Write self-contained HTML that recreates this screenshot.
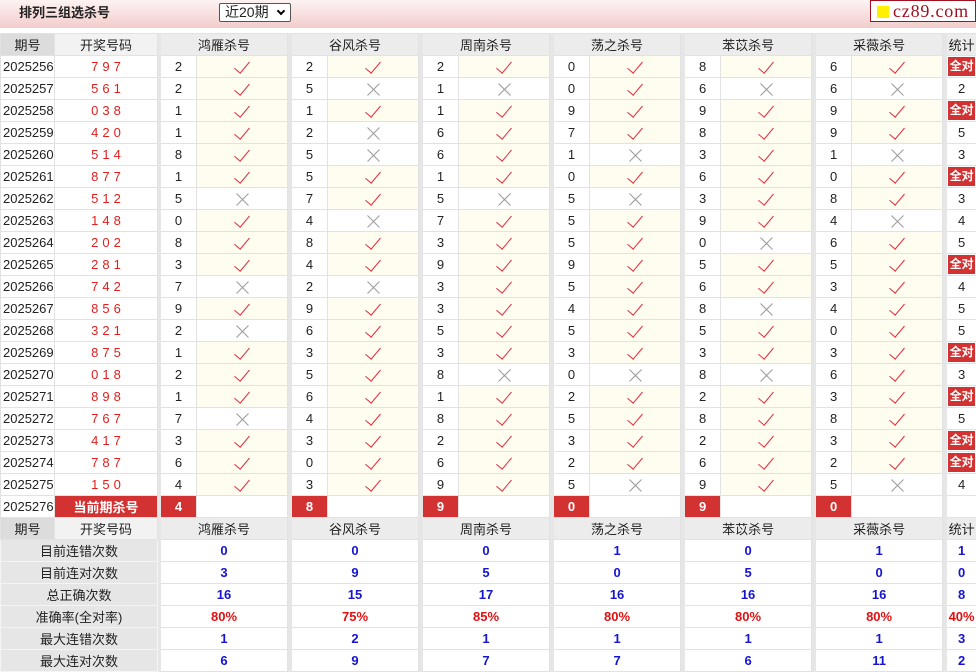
<!DOCTYPE html>
<html><head><meta charset="utf-8"><style>
*{box-sizing:border-box}
body{margin:0;width:976px;height:670px;overflow:hidden;background:#fff;font-family:"Liberation Sans","Noto Sans CJK SC",sans-serif;font-size:13px;color:#222}
.top{position:absolute;left:0;top:0;width:976px;height:28px;background:linear-gradient(#fdf3f3,#f3cccc)}
.ttl{position:absolute;left:19px;top:5px;font-size:13px;line-height:16px;font-weight:bold;color:#222}
.sel{position:absolute;left:219px;top:3px;width:72px;height:19px;border:1px solid #555;background:#fff;border-radius:2px;font-size:14px;padding-left:5px;line-height:17px}
.sel b{position:absolute;right:6px;top:4px;width:6px;height:6px;border:solid #000;border-width:0 2px 2px 0;transform:rotate(45deg)}
.logo{position:absolute;left:870px;top:0;width:106px;height:22px;background:#fff;border:1px solid #a01020;font-family:"Liberation Serif",serif;font-size:18px;color:#a01020;line-height:20px;padding-left:22px;letter-spacing:.8px;overflow:hidden;white-space:nowrap}
.logo i{position:absolute;left:6px;top:5px;width:12px;height:12px;background:#ffef00}
table{position:absolute;left:0;top:33px;border-collapse:collapse;table-layout:fixed;width:976px}
td{height:22px;border:1px solid #e2e2e2;padding:0;text-align:center;white-space:nowrap;overflow:hidden}
.h td{background:#ececec;color:#222}
.h td.h1{background:#dcdcdc}
.h td.h2{background:#f2f2f2}
td.s{background:#e6e6e6;border-color:#e6e6e6}
td.q{text-align:left;padding-left:2px}
td.r{color:#e02020;letter-spacing:4px;padding-left:4px}
td.c{background:#fffdf0}
i.k{display:inline-block;width:8px;height:15px;border:solid #e03040;border-width:0 1.6px 1.6px 0;transform:rotate(40deg);margin-top:-4px;vertical-align:middle}
i.x{display:inline-block;position:relative;width:13px;height:13px;vertical-align:middle}
i.x:before,i.x:after{content:"";position:absolute;left:-2px;top:6px;width:17px;height:1px;background:#9a9a9a;transform:rotate(45deg)}
i.x:after{transform:rotate(-45deg)}
td.a{padding:1px}
td.a span{display:block;background:#d23232;color:#fff;font-weight:bold;font-size:12px;height:19px;line-height:19px}
td.red{background:#d23232;color:#fff;font-weight:bold}
td.lb{background:#e6e6e6;border-color:#f4f4f4}
td.v{color:#1515d0;font-weight:bold}
td.p{color:#e01010;font-weight:bold}
</style></head><body>
<div class="top"><div class="ttl">排列三组选杀号</div><div class="sel">近20期<b></b></div><div class="logo"><i></i>cz89.com</div></div>
<table>
<colgroup><col style="width:54px"><col style="width:103px"><col style="width:3px">
<col style="width:36px"><col style="width:91px"><col style="width:4px">
<col style="width:36px"><col style="width:91px"><col style="width:4px">
<col style="width:36px"><col style="width:91px"><col style="width:4px">
<col style="width:36px"><col style="width:91px"><col style="width:4px">
<col style="width:36px"><col style="width:91px"><col style="width:4px">
<col style="width:36px"><col style="width:91px"><col style="width:4px">
<col style="width:30px"></colgroup>
<tr class="h"><td class="h1">期号</td><td class="h2">开奖号码</td><td class="s"></td><td colspan="2">鸿雁杀号</td><td class="s"></td><td colspan="2">谷风杀号</td><td class="s"></td><td colspan="2">周南杀号</td><td class="s"></td><td colspan="2">荡之杀号</td><td class="s"></td><td colspan="2">苯苡杀号</td><td class="s"></td><td colspan="2">采薇杀号</td><td class="s"></td><td>统计</td></tr>
<tr><td class="q">2025256</td><td class="r">797</td><td class="s"></td><td>2</td><td class="c"><i class="k"></i></td><td class="s"></td><td>2</td><td class="c"><i class="k"></i></td><td class="s"></td><td>2</td><td class="c"><i class="k"></i></td><td class="s"></td><td>0</td><td class="c"><i class="k"></i></td><td class="s"></td><td>8</td><td class="c"><i class="k"></i></td><td class="s"></td><td>6</td><td class="c"><i class="k"></i></td><td class="s"></td><td class="a"><span>全对</span></td></tr>
<tr><td class="q">2025257</td><td class="r">561</td><td class="s"></td><td>2</td><td class="c"><i class="k"></i></td><td class="s"></td><td>5</td><td><i class="x"></i></td><td class="s"></td><td>1</td><td><i class="x"></i></td><td class="s"></td><td>0</td><td class="c"><i class="k"></i></td><td class="s"></td><td>6</td><td><i class="x"></i></td><td class="s"></td><td>6</td><td><i class="x"></i></td><td class="s"></td><td>2</td></tr>
<tr><td class="q">2025258</td><td class="r">038</td><td class="s"></td><td>1</td><td class="c"><i class="k"></i></td><td class="s"></td><td>1</td><td class="c"><i class="k"></i></td><td class="s"></td><td>1</td><td class="c"><i class="k"></i></td><td class="s"></td><td>9</td><td class="c"><i class="k"></i></td><td class="s"></td><td>9</td><td class="c"><i class="k"></i></td><td class="s"></td><td>9</td><td class="c"><i class="k"></i></td><td class="s"></td><td class="a"><span>全对</span></td></tr>
<tr><td class="q">2025259</td><td class="r">420</td><td class="s"></td><td>1</td><td class="c"><i class="k"></i></td><td class="s"></td><td>2</td><td><i class="x"></i></td><td class="s"></td><td>6</td><td class="c"><i class="k"></i></td><td class="s"></td><td>7</td><td class="c"><i class="k"></i></td><td class="s"></td><td>8</td><td class="c"><i class="k"></i></td><td class="s"></td><td>9</td><td class="c"><i class="k"></i></td><td class="s"></td><td>5</td></tr>
<tr><td class="q">2025260</td><td class="r">514</td><td class="s"></td><td>8</td><td class="c"><i class="k"></i></td><td class="s"></td><td>5</td><td><i class="x"></i></td><td class="s"></td><td>6</td><td class="c"><i class="k"></i></td><td class="s"></td><td>1</td><td><i class="x"></i></td><td class="s"></td><td>3</td><td class="c"><i class="k"></i></td><td class="s"></td><td>1</td><td><i class="x"></i></td><td class="s"></td><td>3</td></tr>
<tr><td class="q">2025261</td><td class="r">877</td><td class="s"></td><td>1</td><td class="c"><i class="k"></i></td><td class="s"></td><td>5</td><td class="c"><i class="k"></i></td><td class="s"></td><td>1</td><td class="c"><i class="k"></i></td><td class="s"></td><td>0</td><td class="c"><i class="k"></i></td><td class="s"></td><td>6</td><td class="c"><i class="k"></i></td><td class="s"></td><td>0</td><td class="c"><i class="k"></i></td><td class="s"></td><td class="a"><span>全对</span></td></tr>
<tr><td class="q">2025262</td><td class="r">512</td><td class="s"></td><td>5</td><td><i class="x"></i></td><td class="s"></td><td>7</td><td class="c"><i class="k"></i></td><td class="s"></td><td>5</td><td><i class="x"></i></td><td class="s"></td><td>5</td><td><i class="x"></i></td><td class="s"></td><td>3</td><td class="c"><i class="k"></i></td><td class="s"></td><td>8</td><td class="c"><i class="k"></i></td><td class="s"></td><td>3</td></tr>
<tr><td class="q">2025263</td><td class="r">148</td><td class="s"></td><td>0</td><td class="c"><i class="k"></i></td><td class="s"></td><td>4</td><td><i class="x"></i></td><td class="s"></td><td>7</td><td class="c"><i class="k"></i></td><td class="s"></td><td>5</td><td class="c"><i class="k"></i></td><td class="s"></td><td>9</td><td class="c"><i class="k"></i></td><td class="s"></td><td>4</td><td><i class="x"></i></td><td class="s"></td><td>4</td></tr>
<tr><td class="q">2025264</td><td class="r">202</td><td class="s"></td><td>8</td><td class="c"><i class="k"></i></td><td class="s"></td><td>8</td><td class="c"><i class="k"></i></td><td class="s"></td><td>3</td><td class="c"><i class="k"></i></td><td class="s"></td><td>5</td><td class="c"><i class="k"></i></td><td class="s"></td><td>0</td><td><i class="x"></i></td><td class="s"></td><td>6</td><td class="c"><i class="k"></i></td><td class="s"></td><td>5</td></tr>
<tr><td class="q">2025265</td><td class="r">281</td><td class="s"></td><td>3</td><td class="c"><i class="k"></i></td><td class="s"></td><td>4</td><td class="c"><i class="k"></i></td><td class="s"></td><td>9</td><td class="c"><i class="k"></i></td><td class="s"></td><td>9</td><td class="c"><i class="k"></i></td><td class="s"></td><td>5</td><td class="c"><i class="k"></i></td><td class="s"></td><td>5</td><td class="c"><i class="k"></i></td><td class="s"></td><td class="a"><span>全对</span></td></tr>
<tr><td class="q">2025266</td><td class="r">742</td><td class="s"></td><td>7</td><td><i class="x"></i></td><td class="s"></td><td>2</td><td><i class="x"></i></td><td class="s"></td><td>3</td><td class="c"><i class="k"></i></td><td class="s"></td><td>5</td><td class="c"><i class="k"></i></td><td class="s"></td><td>6</td><td class="c"><i class="k"></i></td><td class="s"></td><td>3</td><td class="c"><i class="k"></i></td><td class="s"></td><td>4</td></tr>
<tr><td class="q">2025267</td><td class="r">856</td><td class="s"></td><td>9</td><td class="c"><i class="k"></i></td><td class="s"></td><td>9</td><td class="c"><i class="k"></i></td><td class="s"></td><td>3</td><td class="c"><i class="k"></i></td><td class="s"></td><td>4</td><td class="c"><i class="k"></i></td><td class="s"></td><td>8</td><td><i class="x"></i></td><td class="s"></td><td>4</td><td class="c"><i class="k"></i></td><td class="s"></td><td>5</td></tr>
<tr><td class="q">2025268</td><td class="r">321</td><td class="s"></td><td>2</td><td><i class="x"></i></td><td class="s"></td><td>6</td><td class="c"><i class="k"></i></td><td class="s"></td><td>5</td><td class="c"><i class="k"></i></td><td class="s"></td><td>5</td><td class="c"><i class="k"></i></td><td class="s"></td><td>5</td><td class="c"><i class="k"></i></td><td class="s"></td><td>0</td><td class="c"><i class="k"></i></td><td class="s"></td><td>5</td></tr>
<tr><td class="q">2025269</td><td class="r">875</td><td class="s"></td><td>1</td><td class="c"><i class="k"></i></td><td class="s"></td><td>3</td><td class="c"><i class="k"></i></td><td class="s"></td><td>3</td><td class="c"><i class="k"></i></td><td class="s"></td><td>3</td><td class="c"><i class="k"></i></td><td class="s"></td><td>3</td><td class="c"><i class="k"></i></td><td class="s"></td><td>3</td><td class="c"><i class="k"></i></td><td class="s"></td><td class="a"><span>全对</span></td></tr>
<tr><td class="q">2025270</td><td class="r">018</td><td class="s"></td><td>2</td><td class="c"><i class="k"></i></td><td class="s"></td><td>5</td><td class="c"><i class="k"></i></td><td class="s"></td><td>8</td><td><i class="x"></i></td><td class="s"></td><td>0</td><td><i class="x"></i></td><td class="s"></td><td>8</td><td><i class="x"></i></td><td class="s"></td><td>6</td><td class="c"><i class="k"></i></td><td class="s"></td><td>3</td></tr>
<tr><td class="q">2025271</td><td class="r">898</td><td class="s"></td><td>1</td><td class="c"><i class="k"></i></td><td class="s"></td><td>6</td><td class="c"><i class="k"></i></td><td class="s"></td><td>1</td><td class="c"><i class="k"></i></td><td class="s"></td><td>2</td><td class="c"><i class="k"></i></td><td class="s"></td><td>2</td><td class="c"><i class="k"></i></td><td class="s"></td><td>3</td><td class="c"><i class="k"></i></td><td class="s"></td><td class="a"><span>全对</span></td></tr>
<tr><td class="q">2025272</td><td class="r">767</td><td class="s"></td><td>7</td><td><i class="x"></i></td><td class="s"></td><td>4</td><td class="c"><i class="k"></i></td><td class="s"></td><td>8</td><td class="c"><i class="k"></i></td><td class="s"></td><td>5</td><td class="c"><i class="k"></i></td><td class="s"></td><td>8</td><td class="c"><i class="k"></i></td><td class="s"></td><td>8</td><td class="c"><i class="k"></i></td><td class="s"></td><td>5</td></tr>
<tr><td class="q">2025273</td><td class="r">417</td><td class="s"></td><td>3</td><td class="c"><i class="k"></i></td><td class="s"></td><td>3</td><td class="c"><i class="k"></i></td><td class="s"></td><td>2</td><td class="c"><i class="k"></i></td><td class="s"></td><td>3</td><td class="c"><i class="k"></i></td><td class="s"></td><td>2</td><td class="c"><i class="k"></i></td><td class="s"></td><td>3</td><td class="c"><i class="k"></i></td><td class="s"></td><td class="a"><span>全对</span></td></tr>
<tr><td class="q">2025274</td><td class="r">787</td><td class="s"></td><td>6</td><td class="c"><i class="k"></i></td><td class="s"></td><td>0</td><td class="c"><i class="k"></i></td><td class="s"></td><td>6</td><td class="c"><i class="k"></i></td><td class="s"></td><td>2</td><td class="c"><i class="k"></i></td><td class="s"></td><td>6</td><td class="c"><i class="k"></i></td><td class="s"></td><td>2</td><td class="c"><i class="k"></i></td><td class="s"></td><td class="a"><span>全对</span></td></tr>
<tr><td class="q">2025275</td><td class="r">150</td><td class="s"></td><td>4</td><td class="c"><i class="k"></i></td><td class="s"></td><td>3</td><td class="c"><i class="k"></i></td><td class="s"></td><td>9</td><td class="c"><i class="k"></i></td><td class="s"></td><td>5</td><td><i class="x"></i></td><td class="s"></td><td>9</td><td class="c"><i class="k"></i></td><td class="s"></td><td>5</td><td><i class="x"></i></td><td class="s"></td><td>4</td></tr>
<tr><td class="q">2025276</td><td class="red">当前期杀号</td><td class="s"></td><td class="red">4</td><td></td><td class="s"></td><td class="red">8</td><td></td><td class="s"></td><td class="red">9</td><td></td><td class="s"></td><td class="red">0</td><td></td><td class="s"></td><td class="red">9</td><td></td><td class="s"></td><td class="red">0</td><td></td><td class="s"></td><td></td></tr>
<tr class="h"><td class="h1">期号</td><td class="h2">开奖号码</td><td class="s"></td><td colspan="2">鸿雁杀号</td><td class="s"></td><td colspan="2">谷风杀号</td><td class="s"></td><td colspan="2">周南杀号</td><td class="s"></td><td colspan="2">荡之杀号</td><td class="s"></td><td colspan="2">苯苡杀号</td><td class="s"></td><td colspan="2">采薇杀号</td><td class="s"></td><td>统计</td></tr>
<tr><td class="lb" colspan="2">目前连错次数</td><td class="s"></td><td class="v" colspan="2">0</td><td class="s"></td><td class="v" colspan="2">0</td><td class="s"></td><td class="v" colspan="2">0</td><td class="s"></td><td class="v" colspan="2">1</td><td class="s"></td><td class="v" colspan="2">0</td><td class="s"></td><td class="v" colspan="2">1</td><td class="s"></td><td class="v">1</td></tr>
<tr><td class="lb" colspan="2">目前连对次数</td><td class="s"></td><td class="v" colspan="2">3</td><td class="s"></td><td class="v" colspan="2">9</td><td class="s"></td><td class="v" colspan="2">5</td><td class="s"></td><td class="v" colspan="2">0</td><td class="s"></td><td class="v" colspan="2">5</td><td class="s"></td><td class="v" colspan="2">0</td><td class="s"></td><td class="v">0</td></tr>
<tr><td class="lb" colspan="2">总正确次数</td><td class="s"></td><td class="v" colspan="2">16</td><td class="s"></td><td class="v" colspan="2">15</td><td class="s"></td><td class="v" colspan="2">17</td><td class="s"></td><td class="v" colspan="2">16</td><td class="s"></td><td class="v" colspan="2">16</td><td class="s"></td><td class="v" colspan="2">16</td><td class="s"></td><td class="v">8</td></tr>
<tr><td class="lb" colspan="2">准确率(全对率)</td><td class="s"></td><td class="p" colspan="2">80%</td><td class="s"></td><td class="p" colspan="2">75%</td><td class="s"></td><td class="p" colspan="2">85%</td><td class="s"></td><td class="p" colspan="2">80%</td><td class="s"></td><td class="p" colspan="2">80%</td><td class="s"></td><td class="p" colspan="2">80%</td><td class="s"></td><td class="p">40%</td></tr>
<tr><td class="lb" colspan="2">最大连错次数</td><td class="s"></td><td class="v" colspan="2">1</td><td class="s"></td><td class="v" colspan="2">2</td><td class="s"></td><td class="v" colspan="2">1</td><td class="s"></td><td class="v" colspan="2">1</td><td class="s"></td><td class="v" colspan="2">1</td><td class="s"></td><td class="v" colspan="2">1</td><td class="s"></td><td class="v">3</td></tr>
<tr><td class="lb" colspan="2">最大连对次数</td><td class="s"></td><td class="v" colspan="2">6</td><td class="s"></td><td class="v" colspan="2">9</td><td class="s"></td><td class="v" colspan="2">7</td><td class="s"></td><td class="v" colspan="2">7</td><td class="s"></td><td class="v" colspan="2">6</td><td class="s"></td><td class="v" colspan="2">11</td><td class="s"></td><td class="v">2</td></tr>
</table>
</body></html>
